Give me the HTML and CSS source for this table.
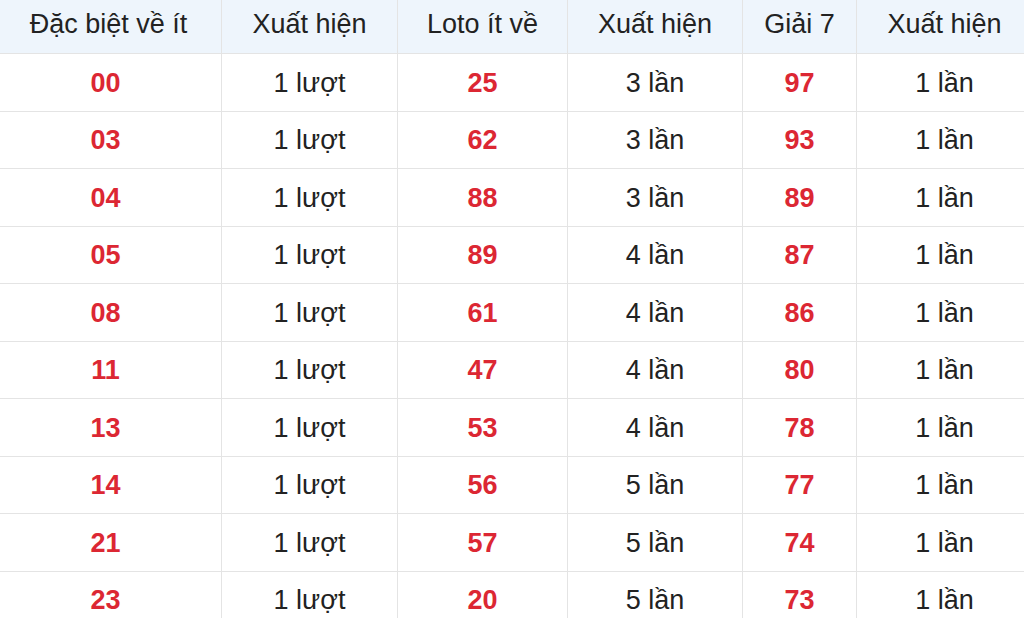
FILE: index.html
```html
<!DOCTYPE html>
<html lang="vi">
<head>
<meta charset="utf-8">
<title>Thống kê</title>
<link rel="stylesheet" href="styles.css">
</head>
<body>
<div class="table">
  <div class="cell head first">Đặc biệt về ít</div>
  <div class="cell head">Xuất hiện</div>
  <div class="cell head">Loto ít về</div>
  <div class="cell head">Xuất hiện</div>
  <div class="cell head">Giải 7</div>
  <div class="cell head last">Xuất hiện</div>

  <div class="cell num first">00</div><div class="cell">1 lượt</div><div class="cell num">25</div><div class="cell">3 lần</div><div class="cell num">97</div><div class="cell last">1 lần</div>
  <div class="cell num first">03</div><div class="cell">1 lượt</div><div class="cell num">62</div><div class="cell">3 lần</div><div class="cell num">93</div><div class="cell last">1 lần</div>
  <div class="cell num first">04</div><div class="cell">1 lượt</div><div class="cell num">88</div><div class="cell">3 lần</div><div class="cell num">89</div><div class="cell last">1 lần</div>
  <div class="cell num first">05</div><div class="cell">1 lượt</div><div class="cell num">89</div><div class="cell">4 lần</div><div class="cell num">87</div><div class="cell last">1 lần</div>
  <div class="cell num first">08</div><div class="cell">1 lượt</div><div class="cell num">61</div><div class="cell">4 lần</div><div class="cell num">86</div><div class="cell last">1 lần</div>
  <div class="cell num first">11</div><div class="cell">1 lượt</div><div class="cell num">47</div><div class="cell">4 lần</div><div class="cell num">80</div><div class="cell last">1 lần</div>
  <div class="cell num first">13</div><div class="cell">1 lượt</div><div class="cell num">53</div><div class="cell">4 lần</div><div class="cell num">78</div><div class="cell last">1 lần</div>
  <div class="cell num first">14</div><div class="cell">1 lượt</div><div class="cell num">56</div><div class="cell">5 lần</div><div class="cell num">77</div><div class="cell last">1 lần</div>
  <div class="cell num first">21</div><div class="cell">1 lượt</div><div class="cell num">57</div><div class="cell">5 lần</div><div class="cell num">74</div><div class="cell last">1 lần</div>
  <div class="cell num first">23</div><div class="cell">1 lượt</div><div class="cell num">20</div><div class="cell">5 lần</div><div class="cell num">73</div><div class="cell last">1 lần</div>
</div>
</body>
</html>
```
FILE: styles.css
```css
* { box-sizing: border-box; }
html, body {
  margin: 0;
  padding: 0;
  background: #ffffff;
  overflow: hidden;
}
body {
  font-family: "Liberation Sans", Arial, sans-serif;
  color: #222222;
}
.table {
  display: grid;
  grid-template-columns: 222px 176px 170px 175px 114px 167px;
  grid-auto-rows: 57.5px;
  grid-template-rows: 54px;
  width: 1024px;
}
.cell {
  display: flex;
  align-items: center;
  justify-content: center;
  font-size: 27px;
  border-right: 1px solid #e4e4e4;
  border-bottom: 1px solid #e4e4e4;
  white-space: nowrap;
  padding-top: 2px;
}
.cell.first { padding-right: 10px; }
.cell.last { border-right: none; padding-left: 8px; }
.head {
  background: #eef5fc;
  padding-top: 0;
  padding-bottom: 4px;
}
.head.first { padding-right: 4px; }
.num {
  color: #dc2733;
  font-weight: bold;
}
```
